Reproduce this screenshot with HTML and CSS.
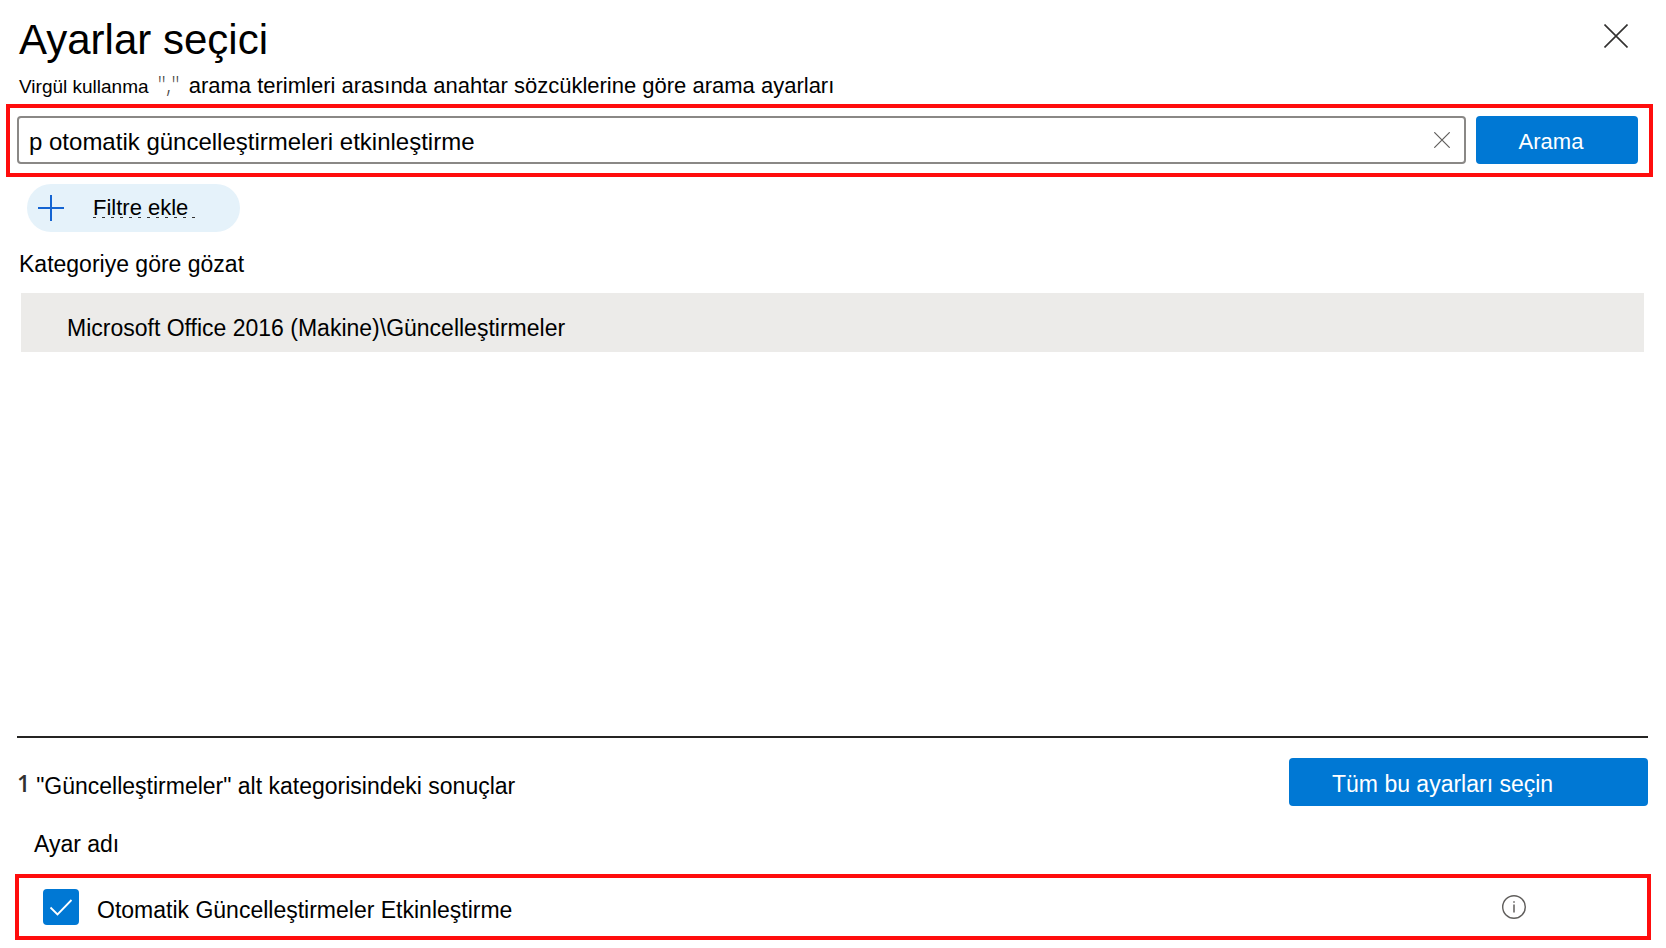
FILE: index.html
```html
<!DOCTYPE html>
<html lang="tr">
<head>
  <meta charset="UTF-8">
  <meta name="viewport" content="width=device-width, initial-scale=1.0">
  <title>Ayarlar seçici</title>
  <link rel="stylesheet" href="styles.css">
</head>
<body>
  <!-- Header -->
  <header class="header">
    <div>
      <h1 class="title">Ayarlar seçici</h1>
      <p class="hint"><span class="hint-start">Virgül kullanma</span><span class="comma">","</span><span>arama terimleri arasında anahtar sözcüklerine göre arama ayarları</span></p>
    </div>
    <button type="button" class="icon-button close" aria-label="Kapat">
      <svg width="24" height="24" viewBox="0 0 24 24"><path d="M0.5 0.5L23.5 23.5M23.5 0.5L0.5 23.5" fill="none" stroke="#323130" stroke-width="1.6"/></svg>
    </button>
  </header>

  <!-- Search -->
  <form class="search">
    <div class="search-box">
      <input type="text" class="search-input" aria-label="Arama ayarları" value="p otomatik güncelleştirmeleri etkinleştirme">
      <button type="button" class="icon-button" aria-label="Temizle">
        <svg width="16" height="16" viewBox="0 0 16 16"><path d="M0.3 0.3L15.7 15.7M15.7 0.3L0.3 15.7" fill="none" stroke="#605e5c" stroke-width="1.2"/></svg>
      </button>
    </div>
    <button type="button" class="primary search-button">Arama</button>
  </form>

  <button type="button" class="filter">
    <svg width="26" height="26" viewBox="0 0 26 26"><path d="M13 0V26M0 13H26" fill="none" stroke="#1464d2" stroke-width="2"/></svg>
    <span class="filter-text">Filtre ekle</span>
  </button>

  <!-- Categories -->
  <main class="browse">
    <h2 class="subtitle">Kategoriye göre gözat</h2>
    <a href="#results" class="category">Microsoft Office 2016 (Makine)\Güncelleştirmeler</a>
  </main>

  <!-- Results -->
  <section class="results" id="results">
    <div class="results-bar">
      <p class="results-text"><span class="count">1</span> <span>"Güncelleştirmeler" alt kategorisindeki sonuçlar</span></p>
      <button type="button" class="primary select-all">Tüm bu ayarları seçin</button>
    </div>
    <table class="settings">
      <thead>
        <tr><th colspan="2">Ayar adı</th></tr>
      </thead>
      <tbody>
        <tr>
          <td>
            <div class="setting">
              <input type="checkbox" id="autoUpdate" class="checkbox" checked>
              <label for="autoUpdate">Otomatik Güncelleştirmeler Etkinleştirme</label>
            </div>
          </td>
          <td class="info">
            <button type="button" class="icon-button" aria-label="Bilgi">
              <svg width="24" height="24" viewBox="0 0 24 24"><circle cx="12" cy="12" r="11.3" fill="none" stroke="#605e5c" stroke-width="1.4"/><path d="M12 9.5V17.5M12 6.2V7.8" stroke="#605e5c" stroke-width="1.5"/></svg>
            </button>
          </td>
        </tr>
      </tbody>
    </table>
  </section>
</body>
</html>
```
FILE: styles.css
```css
* {
  box-sizing: border-box;
}

body {
  margin: 0;
  min-height: 100vh;
  padding: 16px 0 8px;
  display: flex;
  flex-direction: column;
  font-family: "Liberation Sans", Arial, sans-serif;
  font-size: 23px;
  line-height: 28px;
  color: #000;
  background: #fff;
}

h1, h2, p {
  margin: 0;
  font-weight: normal;
}

button, input {
  font: inherit;
}

.header {
  display: flex;
  justify-content: space-between;
  align-items: flex-start;
  padding: 0 26px 0 19px;
}

.title {
  font-size: 42px;
  line-height: 48px;
}

.hint {
  display: flex;
  align-items: baseline;
  height: 30px;
  margin-top: 6px;
  font-size: 22px;
}

.hint-start {
  font-size: 19px;
}

.comma {
  margin: 0 9px;
  font-family: "Open Sans", sans-serif;
  font-size: 24px;
  font-weight: 300;
  color: #484644;
}

.icon-button {
  display: flex;
  padding: 0;
  border: none;
  background: none;
  cursor: pointer;
}

.close {
  padding: 8px 12px;
}

/* Search row with its red frame */
.search {
  display: flex;
  gap: 10px;
  margin: 4px 13px 0 6px;
  padding: 8px 11px 9px 7px;
  border: 4px solid #ff0d0d;
}

.search-box {
  flex: 1;
  display: flex;
  align-items: center;
  height: 48px;
  padding: 0 14px 0 10px;
  border: 2px solid #8a8886;
  border-radius: 4px;
}

.search-input {
  flex: 1;
  padding: 4px 0 0;
  border: none;
  outline: none;
  background: none;
  font-size: 24px;
  color: #000;
}

.primary {
  height: 48px;
  border: none;
  border-radius: 4px;
  background: #0078d4;
  color: #fff;
  cursor: pointer;
}

.search-button {
  width: 162px;
  padding: 3px 12px 0 0;
  font-size: 22px;
}

.filter {
  display: flex;
  align-items: center;
  align-self: flex-start;
  gap: 29px;
  width: 213px;
  height: 48px;
  margin: 7px 0 0 27px;
  padding: 0 11px;
  border: none;
  border-radius: 24px;
  background: #e5f2fa;
  color: #000;
  font-size: 22px;
  cursor: pointer;
}

/* Broken underline: short dashes with wide gaps */
.filter-text {
  padding-right: 9px;
  line-height: 20px;
  background: repeating-linear-gradient(to right, #323130 0 3px, transparent 3px 9px) bottom / 100% 1px no-repeat;
}

.browse {
  flex: 1;
  padding: 18px 22px 0 21px;
}

.subtitle {
  margin-left: -2px;
  font-size: 23px;
}

.category {
  display: block;
  height: 59px;
  margin-top: 15px;
  padding: 21px 46px 10px;
  background: #ecebe9;
  color: #000;
  text-decoration: none;
}

.results {
  margin: 0 15px;
}

.results-bar {
  display: flex;
  justify-content: space-between;
  margin: 0 3px 0 2px;
  padding-top: 20px;
  border-top: 2px solid #252423;
}

.results-text {
  display: flex;
  gap: 6px;
  padding-top: 14px;
}

.count {
  font-family: "Open Sans", sans-serif;
  font-weight: 600;
  line-height: 22px;
  color: #323130;
}

.select-all {
  width: 359px;
  padding: 3px 90px 0 43px;
  text-align: left;
  white-space: nowrap;
}

.settings {
  width: 100%;
  border-spacing: 0;
}

.settings th {
  padding: 24px 19px 16px;
  font-weight: normal;
  text-align: left;
}

.settings td {
  height: 66px;
  padding: 0;
  border: solid #ff0d0d;
  border-width: 4px 0;
}

.settings td:first-child {
  border-left-width: 4px;
}

.settings td:last-child {
  width: 149px;
  border-right-width: 4px;
}

.setting {
  display: flex;
  align-items: center;
  gap: 18px;
  padding-left: 24px;
}

.setting label {
  padding-top: 6px;
}

.checkbox {
  appearance: none;
  width: 36px;
  height: 36px;
  margin: 0;
  border-radius: 4px;
  background: #0078d4 url("data:image/svg+xml,%3Csvg xmlns='http://www.w3.org/2000/svg' viewBox='0 0 36 36'%3E%3Cpath d='M7.500 18.500L14.500 25.500L28.500 11' fill='none' stroke='white' stroke-width='1.800'/%3E%3C/svg%3E");
}

.checkbox:not(:checked) {
  border: 2px solid #323130;
  background: #fff;
}
```
